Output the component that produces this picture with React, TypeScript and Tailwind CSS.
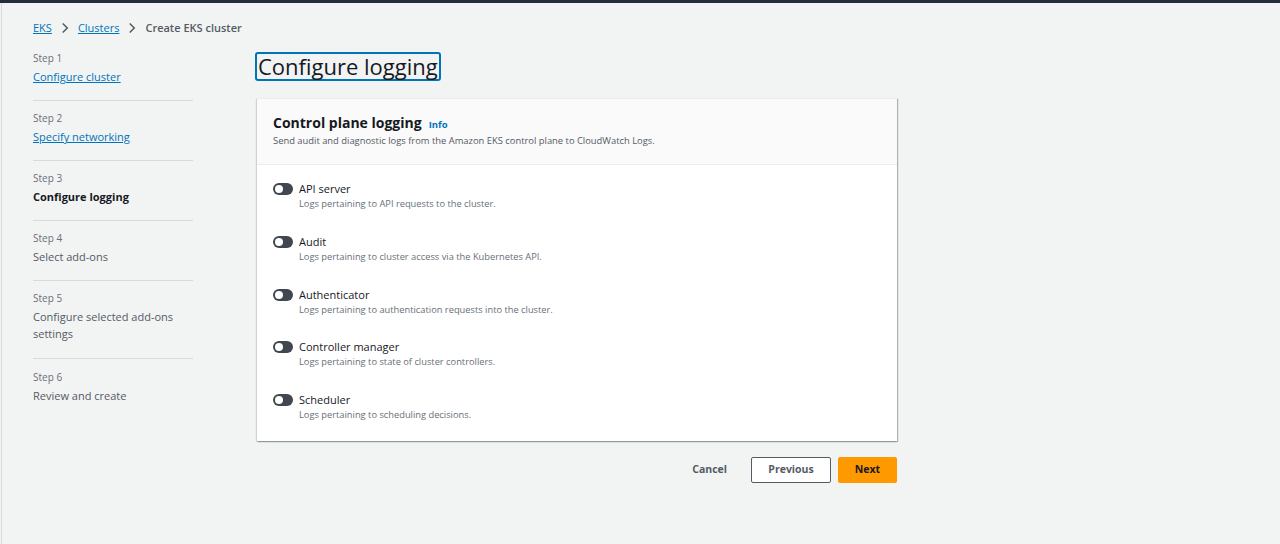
import React from "react";

const font = { fontFamily: '"Open Sans", "Noto Sans", sans-serif' };

function Chevron() {
  return (
    <svg width="12" height="12" viewBox="0 0 16 16" className="mx-[7px] text-[#545b64]">
      <path d="M5 2l6 6-6 6" fill="none" stroke="currentColor" strokeWidth="2" />
    </svg>
  );
}

function Toggle() {
  return (
    <div className="relative mt-[2px] h-[12px] w-[20px] shrink-0 rounded-full bg-[#414750]">
      <div className="absolute left-[2px] top-[2px] h-[8px] w-[8px] rounded-full bg-white" />
    </div>
  );
}

const steps = [
  { n: "Step 1", t: "Configure cluster", kind: "link", pad: "pb-[15px]" },
  { n: "Step 2", t: "Specify networking", kind: "link", pad: "pt-[9px] pb-[15px]" },
  { n: "Step 3", t: "Configure logging", kind: "active", pad: "pt-[9px] pb-[15px]" },
  { n: "Step 4", t: "Select add-ons", kind: "plain", pad: "pt-[9px] pb-[15px]" },
  { n: "Step 5", t: "Configure selected add-ons settings", kind: "plain", pad: "pt-[9px] pb-[16px]" },
  { n: "Step 6", t: "Review and create", kind: "plain", pad: "pt-[10px] pb-[15px]" },
];

const logs = [
  ["API server", "Logs pertaining to API requests to the cluster."],
  ["Audit", "Logs pertaining to cluster access via the Kubernetes API."],
  ["Authenticator", "Logs pertaining to authentication requests into the cluster."],
  ["Controller manager", "Logs pertaining to state of cluster controllers."],
  ["Scheduler", "Logs pertaining to scheduling decisions."],
];

export default function App() {
  return (
    <div style={font} className="h-[544px] w-[1280px] overflow-hidden bg-[#f2f3f3] text-[#16191f]">
      <div className="h-[3px] w-full bg-[#232f3e]" />
      <div className="ml-px flex h-[541px] border-l border-[#d5dbdb]">
        <div className="flex flex-col">
          <div className="flex h-[47px] items-center pl-[31px] pt-[3px] text-[11px]">
            <span className="text-[#0073bb] underline">EKS</span>
            <Chevron />
            <span className="text-[#0073bb] underline">Clusters</span>
            <Chevron />
            <span className="font-semibold text-[#545b64]">Create EKS cluster</span>
          </div>
          <div className="flex">
            <div className="ml-[31px] w-[160px]">
              {steps.map((s, i) => (
                <div
                  key={s.n}
                  className={`flex flex-col ${i < steps.length - 1 ? "border-b border-[#d5dbdb]" : ""} ${s.pad}`}
                >
                  <span className="text-[10px] leading-[17px] text-[#687078]">{s.n}</span>
                  <span
                    className={`mt-[1px] text-[11px] leading-[17px] ${
                      s.kind === "link"
                        ? "text-[#0073bb] underline"
                        : s.kind === "active"
                        ? "font-bold text-[#16191f]"
                        : "text-[#545b64]"
                    }`}
                  >
                    {s.t}
                  </span>
                </div>
              ))}
            </div>
            <div className="ml-[64px] flex w-[640px] flex-col">
              <div className="ml-[-2px] mt-[2px] self-start rounded-[3px] border-2 border-[#0073bb] px-[1px] leading-[25px]">
                <h1 className="text-[22px] font-normal text-[#16191f]">Configure logging</h1>
              </div>
              <div className="mt-[17px] border-t border-[#eaeded] bg-white shadow-[1px_1px_1px_0_rgba(0,28,36,0.3),-1px_1px_1px_0_rgba(0,28,36,0.15)]">
                <div className="border-b border-[#eaeded] bg-[#fafafa] px-[16px] pb-[16px] pt-[13px]">
                  <div className="flex items-baseline">
                    <span className="text-[14px] font-bold text-[#16191f]">Control plane logging</span>
                    <span className="ml-[7px] text-[9.5px] font-bold text-[#0073bb]">Info</span>
                  </div>
                  <div className="mt-[1px] text-[9.4px] text-[#545b64]">
                    Send audit and diagnostic logs from the Amazon EKS control plane to CloudWatch Logs.
                  </div>
                </div>
                <div className="flex flex-col gap-[22.75px] px-[16px] pb-[19px] pt-[16px]">
                  {logs.map(([t, d]) => (
                    <div key={t} className="flex gap-[6px]">
                      <Toggle />
                      <div className="flex flex-col">
                        <span className="text-[11px] leading-[16px] text-[#16191f]">{t}</span>
                        <span className="text-[9.3px] leading-[14px] text-[#687078]">{d}</span>
                      </div>
                    </div>
                  ))}
                </div>
              </div>
              <div className="mt-[16px] flex items-center justify-end">
                <span className="mr-[24px] text-[10.5px] font-bold text-[#545b64]">Cancel</span>
                <div className="flex h-[26px] w-[80px] items-center justify-center rounded-[2px] border border-[#545b64] bg-white text-[10.5px] font-bold text-[#545b64]">
                  Previous
                </div>
                <div className="ml-[7px] flex h-[26px] w-[59px] items-center justify-center rounded-[2px] bg-[#ff9900] text-[10.5px] font-bold text-[#16191f]">
                  Next
                </div>
              </div>
            </div>
          </div>
        </div>
      </div>
    </div>
  );
}
